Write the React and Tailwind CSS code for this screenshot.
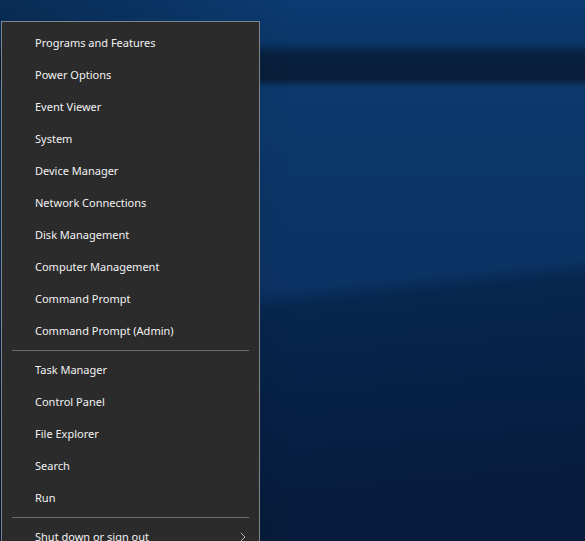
import { ChevronRight } from 'lucide-react';

const groups = [
  [
    'Programs and Features',
    'Power Options',
    'Event Viewer',
    'System',
    'Device Manager',
    'Network Connections',
    'Disk Management',
    'Computer Management',
    'Command Prompt',
    'Command Prompt (Admin)',
  ],
  ['Task Manager', 'Control Panel', 'File Explorer', 'Search', 'Run'],
];

function Item({ label, sub }) {
  return (
    <div className="h-8 flex items-center pl-[33px] pr-[8px] text-[11px] text-[#f2f2f2] hover:bg-[#414141]">
      <span className="flex-1 truncate">{label}</span>
      {sub && <ChevronRight className="w-4 h-4 text-[#b4b4b4]" strokeWidth={1.5} />}
    </div>
  );
}

function Separator() {
  return <div className="h-px bg-[#6c6c6c] mx-[10px] my-[3px]" />;
}

export default function App() {
  return (
    <div
      className="w-[585px] h-[541px] overflow-hidden relative bg-[linear-gradient(174deg,rgba(0,0,0,0)_318px,rgba(0,10,30,0.3)_336px,rgba(0,5,20,0.45)_541px),linear-gradient(180deg,#0b3b72_0px,#0a3769_42px,#08203f_54px,#081d38_78px,#0b396d_88px,#0b3566_200px,#0a3162_330px,#0a2e5c_541px)]"
      style={{ fontFamily: '"Segoe UI", "Noto Sans", "Open Sans", sans-serif' }}
    >
      <div className="absolute inset-y-0 left-0 w-[300px] bg-[linear-gradient(90deg,rgba(0,0,0,0.25),rgba(0,0,0,0))]" />
      <div className="absolute left-px top-[21px] w-[259px] bg-[#2b2b2b] border border-[#7d858b] pt-[5px] pb-2">
        {groups[0].map((l) => (
          <Item key={l} label={l} />
        ))}
        <Separator />
        {groups[1].map((l) => (
          <Item key={l} label={l} />
        ))}
        <Separator />
        <Item label="Shut down or sign out" sub />
      </div>
    </div>
  );
}
